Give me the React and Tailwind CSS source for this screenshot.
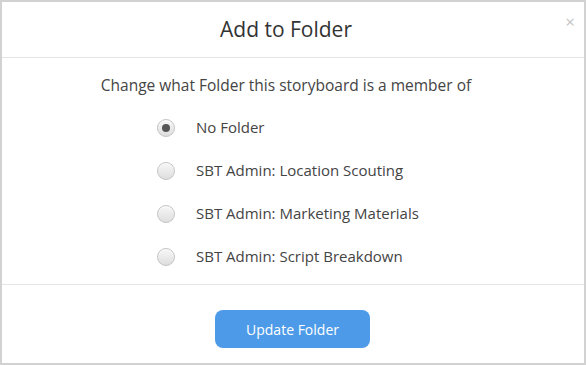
import React, { useState } from "react";

const folders = [
  "No Folder",
  "SBT Admin: Location Scouting",
  "SBT Admin: Marketing Materials",
  "SBT Admin: Script Breakdown",
];

function Radio({ checked }) {
  return (
    <span className="flex h-[18px] w-[18px] items-center justify-center rounded-full border border-[#c4c4c4] bg-gradient-to-b from-[#f7f7f7] to-[#dedede] shadow-[inset_0_1px_1px_rgba(255,255,255,0.8)]">
      {checked && <span className="h-[8px] w-[8px] rounded-full bg-[#555]" />}
    </span>
  );
}

export default function App() {
  const [selected, setSelected] = useState(0);

  return (
    <div
      className="relative h-[365px] w-[586px] border-2 border-[#d2d2d2] bg-white text-[#444]"
      style={{ fontFamily: '"Open Sans", "Noto Sans", sans-serif' }}
    >
      {/* Header */}
      <div className="flex h-[56px] items-center justify-center border-b border-[#e5e5e5] pr-[14px]">
        <h2 className="text-[21px] leading-none text-[#333]">Add to Folder</h2>
      </div>
      <button className="absolute right-[9px] top-[11px] text-[17px] leading-none text-[#c4c4c4]">
        ×
      </button>

      {/* Body */}
      <div className="h-[227px] border-b border-[#e5e5e5] pt-[17px]">
        <p className="pr-[14px] text-center text-[15.5px] leading-[20px] text-[#444]">
          Change what Folder this storyboard is a member of
        </p>
        <div className="mt-[11px] flex flex-col pl-[155px]">
          {folders.map((name, i) => (
            <label
              key={name}
              className="flex h-[43px] cursor-pointer items-center gap-[21px]"
              onClick={() => setSelected(i)}
            >
              <Radio checked={selected === i} />
              <span className="text-[15px] text-[#444]">{name}</span>
            </label>
          ))}
        </div>
      </div>

      {/* Footer */}
      <div className="flex justify-center pt-[25px] pr-[1px]">
        <button className="h-[38px] w-[155px] rounded-[8px] bg-[#4d9be8] text-[14px] text-white">
          Update Folder
        </button>
      </div>
    </div>
  );
}
